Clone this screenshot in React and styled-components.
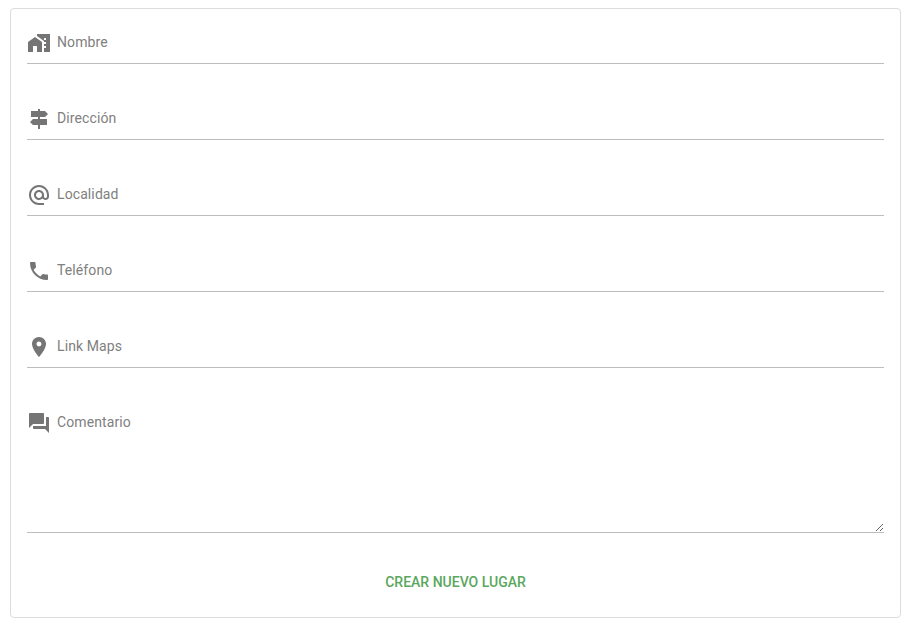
import styled, { createGlobalStyle } from 'styled-components';
import { MdHomeWork, MdSignpost, MdAlternateEmail, MdPhone, MdPlace, MdQuestionAnswer } from 'react-icons/md';

const GlobalStyle = createGlobalStyle`
  html, body {
    margin: 0;
    background: #fff;
    font-family: Roboto, "Liberation Sans", sans-serif;
  }
`

const Card = styled.form`
  box-sizing: border-box;
  width: 891px;
  height: 610px;
  margin: 8px 0 0 10px;
  padding: 16px 16px 0;
  border: 1px solid #dcdcdc;
  border-radius: 4px;
  display: flex;
  flex-direction: column;
  gap: 37px;
`

const Field = styled.label`
  display: flex;
  align-items: flex-start;
  border-bottom: 1px solid #bdbdbd;
  padding-bottom: ${props => (props.$multiline ? '0' : '4px')};
`

const IconSlot = styled.span`
  flex: none;
  width: 30px;
  height: 34px;
  display: flex;
  align-items: center;
  padding-top: 2px;
  box-sizing: border-box;
  color: #757575;
  font-size: 24px;
`

const TextInput = styled.input`
  flex: 1;
  min-width: 0;
  height: 34px;
  padding: 0;
  border: 0;
  outline: 0;
  background: transparent;
  font: 400 14px Roboto, sans-serif;
  letter-spacing: 0.1px;
  color: #333;

  &::placeholder {
    color: #808080;
    opacity: 1;
  }
`

const TextArea = styled.textarea`
  flex: 1;
  box-sizing: border-box;
  display: block;
  min-width: 0;
  height: 127px;
  padding: 9px 0 0;
  border: 0;
  outline: 0;
  background: transparent;
  font: 400 14px/16px Roboto, sans-serif;
  letter-spacing: 0.1px;
  color: #333;
  resize: vertical;

  &::placeholder {
    color: #808080;
    opacity: 1;
  }
`

const Actions = styled.div`
  display: flex;
  justify-content: center;
`

const SubmitButton = styled.button`
  padding: 4px 8px;
  border: 0;
  background: transparent;
  color: #5aa75e;
  font: 500 14px/16px Roboto, sans-serif;
  text-transform: uppercase;
  cursor: pointer;
`

const fields = [
  { name: 'nombre', label: 'Nombre', icon: MdHomeWork },
  { name: 'direccion', label: 'Dirección', icon: MdSignpost },
  { name: 'localidad', label: 'Localidad', icon: MdAlternateEmail },
  { name: 'telefono', label: 'Teléfono', icon: MdPhone },
  { name: 'maps', label: 'Link Maps', icon: MdPlace },
];

function App() {
  return (
    <>
      <GlobalStyle />
      <Card onSubmit={e => e.preventDefault()}>
        {fields.map(({ name, label, icon: Icon }) => (
          <Field key={name}>
            <IconSlot><Icon /></IconSlot>
            <TextInput name={name} placeholder={label} />
          </Field>
        ))}
        <Field $multiline>
          <IconSlot><MdQuestionAnswer /></IconSlot>
          <TextArea name="comentario" placeholder="Comentario" />
        </Field>
        <Actions>
          <SubmitButton type="submit">Crear nuevo lugar</SubmitButton>
        </Actions>
      </Card>
    </>
  );
}

export default App;
